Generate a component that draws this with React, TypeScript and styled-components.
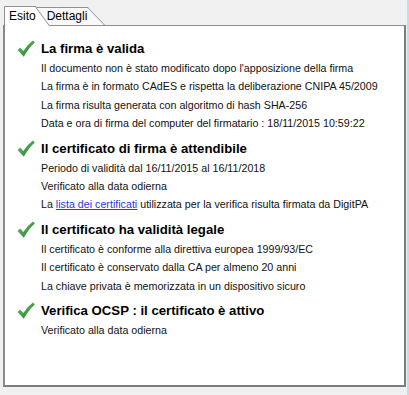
import styled, { createGlobalStyle } from 'styled-components'

const GlobalStyle = createGlobalStyle`
  html, body {
    margin: 0;
    padding: 0;
    background: #f0f0f0;
  }
  body {
    font-family: "Liberation Sans", Arial, sans-serif;
  }
`

const Window = styled.div`
  width: 409px;
  height: 395px;
  box-sizing: border-box;
  background: #f0f0f0;
  border-right: 2px solid #c9d8ec;
  display: flex;
  flex-direction: column;
  padding: 0 1px 0 3px;
`

const TabStrip = styled.div`
  height: 25px;
  display: flex;
  align-items: flex-end;
  padding-left: 1px;
`

const Tab = styled.div<{ $active?: boolean }>`
  position: relative;
  z-index: ${p => (p.$active ? 2 : 1)};
  height: ${p => (p.$active ? 20 : 18)}px;
  margin-bottom: ${p => (p.$active ? -1 : 0)}px;
  margin-left: ${p => (p.$active ? 0 : -8)}px;
  padding: ${p => (p.$active ? '0 0 0 4px' : '0 0 0 19px')};
  box-sizing: border-box;
  background: ${p => (p.$active ? '#ffffff' : '#f9f9f9')};
  border-top: 1px solid #8e9192;
  border-left: ${p => (p.$active ? '1px solid #8e9192' : 'none')};
  font-size: 12px;
  line-height: ${p => (p.$active ? 19 : 17)}px;
  color: #000;
  isolation: isolate;

  &::after {
    content: '';
    position: absolute;
    z-index: -1;
    top: -1px;
    bottom: 0;
    right: ${p => (p.$active ? -14 : -18)}px;
    width: 30px;
    background: inherit;
    border-top: 1px solid #8e9192;
    border-right: 1px solid #8e9192;
    transform: skewX(${p => (p.$active ? 36 : 44)}deg);
    transform-origin: bottom left;
  }
`

const Panel = styled.div`
  height: 362px;
  box-sizing: border-box;
  background: #ffffff;
  border: 1px solid #8e9192;
  border-left: 2px solid #8a8a8a;
  border-right: 2px solid #7d7d7d;
  border-bottom: 2px solid #7d7d7d;
  padding: 13px 8px 0 12px;
  display: flex;
  flex-direction: column;
  gap: 6px;
`

const Section = styled.div`
  display: grid;
  grid-template-columns: 18px 1fr;
  column-gap: 6px;
`

const Check = styled.svg`
  width: 18px;
  height: 18px;
  margin-top: 1px;
`

const Heading = styled.div`
  font-size: 13.2px;
  font-weight: bold;
  line-height: 20px;
  color: #000;
`

const Line = styled.div`
  grid-column: 2;
  font-size: 10.7px;
  line-height: 18.4px;
  color: #111;
  white-space: nowrap;
`

const Link = styled.a`
  color: #1b3ed4;
  text-decoration: underline;
`

const CheckIcon = () => (
  <Check viewBox="0 0 18 18">
    <defs>
      <linearGradient id="g" x1="0" y1="0" x2="1" y2="1">
        <stop offset="0" stopColor="#6cc46c" />
        <stop offset="1" stopColor="#1f7a25" />
      </linearGradient>
    </defs>
    <path
      d="M0.5 10 L3.2 7.4 L6.3 11 Q10 5 16 0.6 L17.8 2.4 Q11.5 8 6.8 16.8 Z"
      fill="url(#g)"
    />
  </Check>
)

type Item = { title: string; lines: React.ReactNode[] }

const items: Item[] = [
  {
    title: 'La firma è valida',
    lines: [
      "Il documento non è stato modificato dopo l'apposizione della firma",
      'La firma è in formato CAdES e rispetta la deliberazione CNIPA 45/2009',
      'La firma risulta generata con algoritmo di hash SHA-256',
      'Data e ora di firma del computer del firmatario : 18/11/2015 10:59:22'
    ]
  },
  {
    title: 'Il certificato di firma è attendibile',
    lines: [
      'Periodo di validità dal 16/11/2015 al 16/11/2018',
      'Verificato alla data odierna',
      <>La <Link href="#">lista dei certificati</Link> utilizzata per la verifica risulta firmata da DigitPA</>
    ]
  },
  {
    title: 'Il certificato ha validità legale',
    lines: [
      'Il certificato è conforme alla direttiva europea 1999/93/EC',
      'Il certificato è conservato dalla CA per almeno 20 anni',
      'La chiave privata è memorizzata in un dispositivo sicuro'
    ]
  },
  {
    title: 'Verifica OCSP : il certificato è attivo',
    lines: ['Verificato alla data odierna']
  }
]

export default function App () {
  return (
    <>
      <GlobalStyle />
      <Window>
        <TabStrip>
          <Tab $active>Esito</Tab>
          <Tab>Dettagli</Tab>
        </TabStrip>
        <Panel>
          {items.map(item => (
            <Section key={item.title}>
              <CheckIcon />
              <Heading>{item.title}</Heading>
              {item.lines.map((line, i) => (
                <Line key={i}>{line}</Line>
              ))}
            </Section>
          ))}
        </Panel>
      </Window>
    </>
  )
}
